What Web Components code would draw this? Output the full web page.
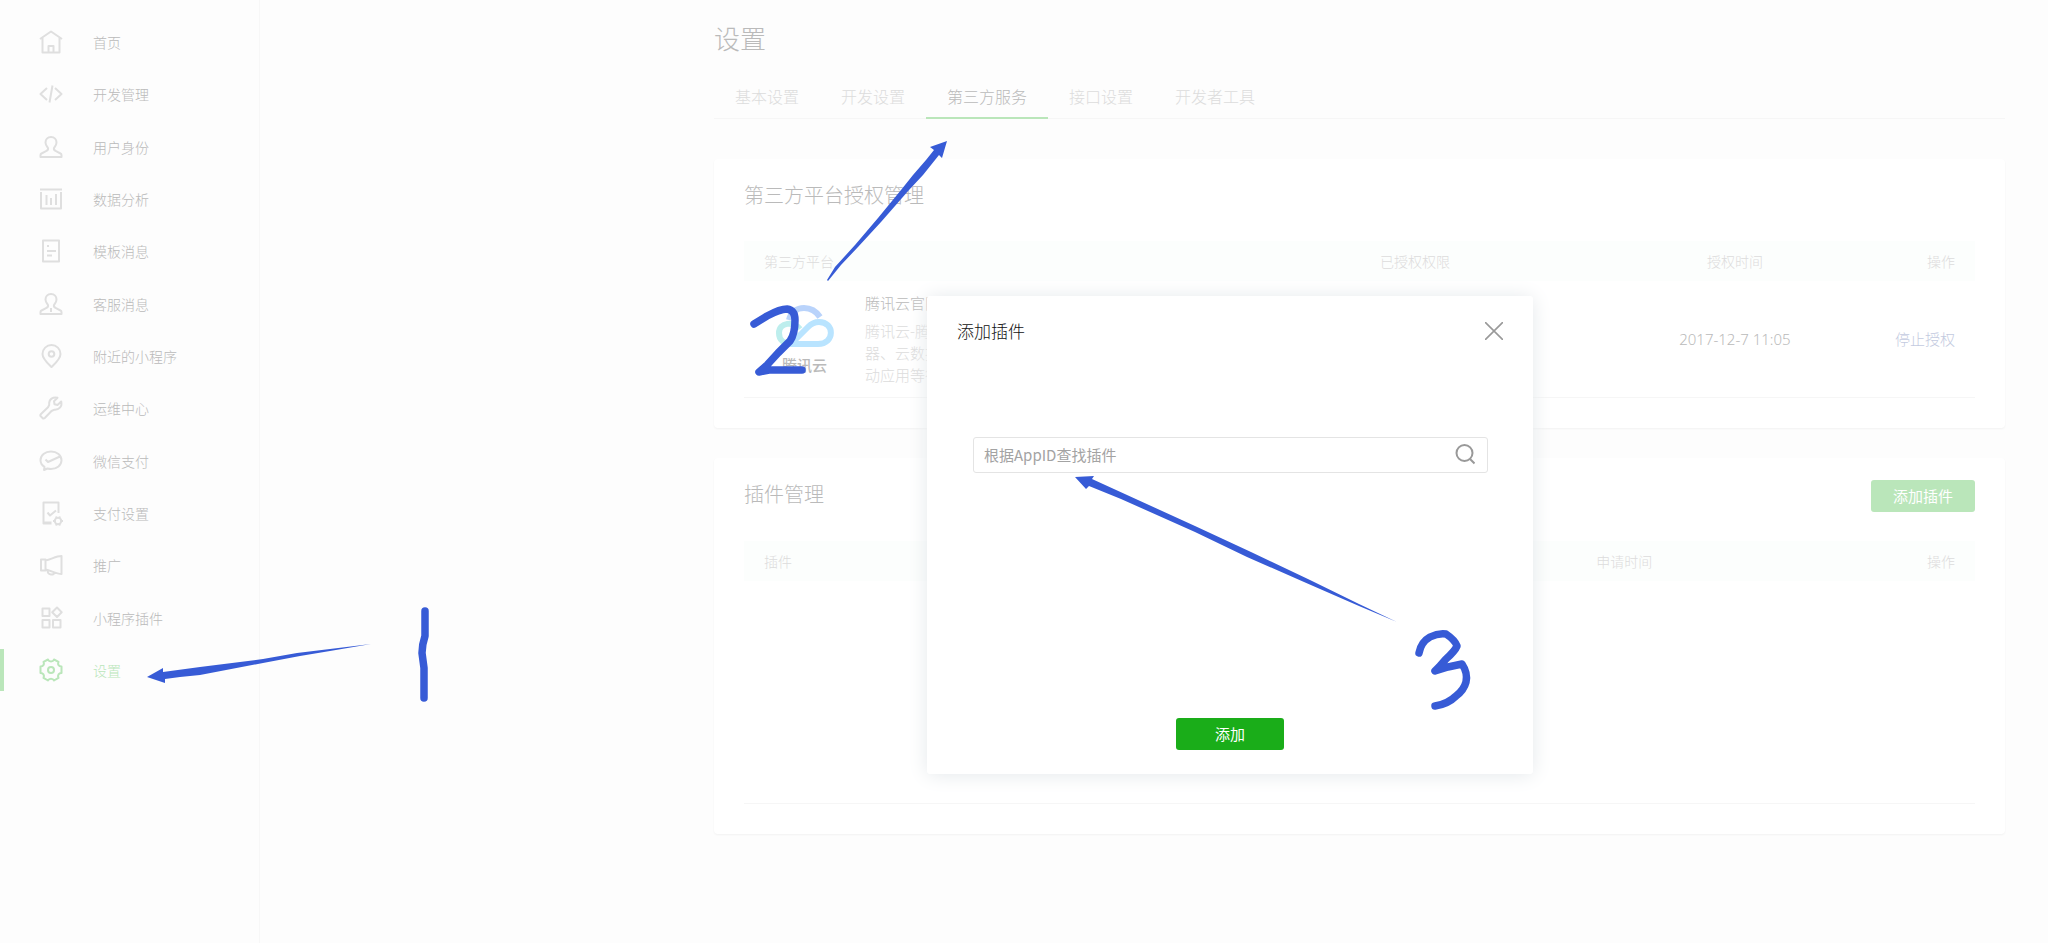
<!DOCTYPE html>
<html lang="zh-CN">
<head>
<meta charset="utf-8">
<title>设置</title>
<style>
  :root {
    --text: #bababa;
    --text-light: #dcdcdc;
    --line: #f6f6f6;
    --green: #1aad19;
    --green-light: #bae6ba;
  }

  body {
    background-color: #fdfdfd;
    color: var(--text);
    font-family: "Noto Sans CJK SC", sans-serif;
    font-size: 15px;
    line-height: 22px;
    margin: 0;
    min-height: 100vh;
    position: relative;
  }

  .page {
    display: flex;
    min-height: 100vh;
  }

  main {
    flex: 1;
    padding: 0 43px 0 454px;
  }

  h1 {
    font-size: 26px;
    font-weight: 300;
    line-height: 40px;
    margin: 18px 0 17px;
  }
</style>
</head>
<body>
  <div class="page">
    <side-menu></side-menu>
    <main>
      <h1>设置</h1>
      <tab-bar></tab-bar>
      <panel-card heading="第三方平台授权管理">
        <platform-table></platform-table>
      </panel-card>
      <panel-card heading="插件管理">
        <green-button slot="action" faded>添加插件</green-button>
        <plugin-table></plugin-table>
      </panel-card>
    </main>
  </div>
  <plugin-dialog heading="添加插件"></plugin-dialog>
  <pen-marks></pen-marks>

<script>
const icons = {
  home: '<path d="M1 9 12 1.500 23 9M3.500 8v14.500h17V8M9.500 22v-6h5v6"/>',
  code: '<path d="M8 6 1.500 12 8 18M16 6l6.500 6L16 18M13.500 3.500l-3 17"/>',
  user: '<path d="M12 2c-3.500 0-5.500 2.500-5.500 5.500 0 2.500 1.500 4 2.500 5.500.5 1.500-.5 2.500-2 3.200L2.500 18.500c-.8.4-1 1-1 1.500v2h21v-2c0-.5-.2-1.100-1-1.500L17 16.200c-1.500-.7-2.500-1.700-2-3.200 1-1.500 2.500-3 2.500-5.500C17.500 4.500 15.500 2 12 2z"/>',
  chart: '<path d="M1 2.500h22M2 5v16.500h20V5M7.500 8v10M12 11v7M17 7v11"/>',
  template: '<path d="M4 1.500h16v21H4zM8 7h2M8 12h9M8 16.500h5"/>',
  service: '<path d="M12 2c-3.500 0-5.500 2.500-5.500 5.500 0 2.500 1.500 4 2.500 5.500.5 1.500-.5 2.500-2 3.200L2.500 18.500c-.8.4-1 1-1 1.500v2h21v-2c0-.5-.2-1.100-1-1.500L17 16.200c-1.500-.7-2.500-1.700-2-3.200 1-1.500 2.500-3 2.500-5.500C17.500 4.500 15.500 2 12 2zM12 16v4"/>',
  nearby: '<path d="M12.500 23C9 19.500 3.500 15 3.500 10a9 9 0 0 1 18 0c0 5-5.500 9.500-9 13z"/><circle cx="12.500" cy="10" r="2.800"/>',
  wrench: '<path d="M18.500 1.800c-4-1.300-9 1.200-8.300 7.200L9 11.200 2 18c-1 1-.8 1.700 0 2.500l1.500 1.500c.8.8 1.500.8 2.500-.2L12.500 15l2.500-1.200c5 .5 8.500-3.300 7.200-8.300L18.500 9 15.500 8.300 15 5.200z"/>',
  pay: '<path d="M12 2.500c-6 0-10.500 3.800-10.500 8.700 0 3 1.500 5 4 6.700L5 21l3.500-1.500c1 .3 2.200.5 3.500.5 6 0 10.500-3.800 10.500-8.800S18 2.500 12 2.500zM6.500 10.500l2.500 2.500 12-5.500"/>',
  phone: '<path d="M19.500 12V1.500h-15v21h8M4.500 21.500h8M8.500 11.500l2.500 3 6-5"/><circle cx="19" cy="20" r="3.200"/><path d="M17 15.500l.6 1.500M21 15.500l-.6 1.500M17 24.500l.6-1.500M21 24.500l-.6-1.500M14 20h1.800M22.200 20H24" />',
  horn: '<path d="M2 6.500h4.500v11H2zM6.500 7.500C12 6.500 17 3 22.500 3v18C17 21 12 17.500 6.500 16.500M8.500 17.500c.5 5.500 6.500 4.500 7 2"/>',
  plugin: '<path d="M3.500 2.500h7v7.500h-7zM3.500 14h7v7.500h-7zM14 14h7.500v7.500h-7.500zM18 1.500 22.700 6.200 18 11 13.200 6.200z"/>',
  gear: '<path d="M9 1.500c1 2.500 5 2.500 6 0l4.500 2.300c-1.200 2.700.3 4.700 3 4.700v6.500c-2.700 0-4.200 2-3 4.800L15 22.500c-1-2.500-5-2.500-6 0l-4.500-2.700c1.200-2.800-.3-4.800-3-4.800V8.500c2.700 0 4.200-2 3-4.700z"/><circle cx="12" cy="12" r="3"/>'
}

class SideMenu extends HTMLElement {
  constructor () {
    super()
    this.shadow = this.attachShadow({ mode: 'open' })
    this.items = [
      ['home', '首页'],
      ['code', '开发管理'],
      ['user', '用户身份'],
      ['chart', '数据分析'],
      ['template', '模板消息'],
      ['service', '客服消息'],
      ['nearby', '附近的小程序'],
      ['wrench', '运维中心'],
      ['pay', '微信支付'],
      ['phone', '支付设置'],
      ['horn', '推广'],
      ['plugin', '小程序插件'],
      ['gear', '设置']
    ]
  }

  connectedCallback () {
    this.render()
  }

  render () {
    this.shadow.innerHTML =
      /* html */`
      <style>
        :host {
          border-right: 1px solid #f7f7f7;
          box-sizing: border-box;
          flex: none;
          width: 260px;
        }

        ul {
          display: grid;
          grid-auto-rows: 1fr;
          list-style: none;
          margin: 0;
          min-height: 680px;
          padding: 16px 0 0;
        }

        li {
          display: flex;
          align-items: center;
        }

        a {
          align-items: center;
          border-left: 4px solid transparent;
          color: inherit;
          display: flex;
          flex: 1;
          font-size: 14px;
          font-weight: 300;
          gap: 30px;
          height: 42px;
          padding-left: 35px;
          text-decoration: none;
        }

        svg {
          fill: none;
          height: 24px;
          overflow: visible;
          stroke: #dfdfdf;
          stroke-linejoin: round;
          stroke-width: 2;
          width: 24px;
        }

        a.active {
          border-color: var(--green-light);
          color: var(--green-light);
        }

        a.active svg {
          stroke: var(--green-light);
        }
      </style>

      <nav>
        <ul>
          ${this.items.map(([icon, label]) => `
            <li><a href="#" class="${icon === 'gear' ? 'active' : ''}">
              <svg viewBox="0 0 24 24">${icons[icon]}</svg>
              <span>${label}</span>
            </a></li>`).join('')}
        </ul>
      </nav>
    `
  }
}

class TabBar extends HTMLElement {
  constructor () {
    super()
    this.shadow = this.attachShadow({ mode: 'open' })
    this.tabs = ['基本设置', '开发设置', '第三方服务', '接口设置', '开发者工具']
  }

  connectedCallback () {
    this.render()
  }

  render () {
    this.shadow.innerHTML =
      /* html */`
      <style>
        :host {
          display: block;
        }

        nav {
          border-bottom: 1px solid var(--line);
          display: flex;
        }

        a {
          border-bottom: 2px solid transparent;
          color: var(--text-light);
          font-size: 16px;
          font-weight: 300;
          line-height: 42px;
          margin-bottom: -1px;
          padding: 0 21px;
          text-decoration: none;
        }

        a.active {
          border-color: var(--green-light);
          color: var(--text);
        }
      </style>

      <nav>
        ${this.tabs.map((tab, i) => `<a href="#" class="${i === 2 ? 'active' : ''}">${tab}</a>`).join('')}
      </nav>
    `
  }
}

class PanelCard extends HTMLElement {
  constructor () {
    super()
    this.shadow = this.attachShadow({ mode: 'open' })
  }

  connectedCallback () {
    this.render()
  }

  render () {
    this.shadow.innerHTML =
      /* html */`
      <style>
        :host {
          background-color: #fff;
          border-radius: 4px;
          box-shadow: 0 1px 2px #f2f2f2;
          display: block;
          margin-top: 30px;
          padding: 0 30px 30px;
        }

        :host(:first-of-type) {
          margin-top: 40px;
        }

        header {
          align-items: flex-start;
          display: flex;
          justify-content: space-between;
          padding: 22px 0 29px;
        }

        h2 {
          font-size: 20px;
          font-weight: 300;
          line-height: 27px;
          margin: 0 0 4px;
        }
      </style>

      <header>
        <h2>${this.getAttribute('heading')}</h2>
        <slot name="action"></slot>
      </header>
      <slot></slot>
    `
  }
}

const tableStyle = /* css */`
  :host {
    display: block;
  }

  table {
    border-bottom: 1px solid var(--line);
    border-collapse: collapse;
    font-weight: 300;
    table-layout: fixed;
    width: 100%;
  }

  th {
    background-color: #fcfefd;
    color: var(--text-light);
    font-size: 14px;
    font-weight: 300;
    height: 40px;
    line-height: 20px;
    padding: 0 20px;
  }

  td {
    padding: 0 20px;
    text-align: center;
  }

  th:first-child {
    text-align: left;
  }

  th:last-child,
  td:last-child {
    text-align: right;
  }
`

class PlatformTable extends HTMLElement {
  constructor () {
    super()
    this.shadow = this.attachShadow({ mode: 'open' })
  }

  connectedCallback () {
    this.render()
  }

  render () {
    this.shadow.innerHTML =
      /* html */`
      <style>
        ${tableStyle}

        .platform {
          display: flex;
          gap: 22px;
          height: 116px;
          text-align: left;
        }

        .logo {
          align-items: center;
          display: flex;
          flex-direction: column;
          font-size: 15px;
          font-weight: 500;
          padding: 24px 0 0 2px;
          width: 77px;
        }

        .logo svg {
          fill: none;
          height: 42px;
          margin-bottom: 7px;
          stroke-width: 6;
          width: 58px;
        }

        .name {
          line-height: 24px;
          padding: 10px 0 5px;
        }

        .about {
          color: var(--text-light);
          margin: 0;
        }

        .time {
          font-family: "Noto Sans", "Noto Sans CJK SC", sans-serif;
        }

        a {
          color: #c3cae0;
          text-decoration: none;
        }
      </style>

      <table>
        <colgroup>
          <col style="width: 36%">
          <col style="width: 37%">
          <col style="width: 15%">
          <col style="width: 12%">
        </colgroup>
        <thead>
          <tr><th>第三方平台</th><th>已授权权限</th><th>授权时间</th><th>操作</th></tr>
        </thead>
        <tbody>
          <tr>
            <td>
              <div class="platform">
                <div class="logo">
                  <svg viewBox="0 0 58 42">
                    <path d="M13 15C15 7 21 3 28 3c7 0 12 3 16 9" stroke="#b9d3fb"/>
                    <path d="M24 24c-6-8-21-7-21 4 0 7 5 11 12 11" stroke="#bdeeed"/>
                    <path d="M14 39h28c17 0 17-22 1-22-4 0-7 1-11 5L16 38" stroke="#b9e4ff"/>
                  </svg>
                  <span>腾讯云</span>
                </div>
                <div>
                  <div class="name">腾讯云官网</div>
                  <p class="about">腾讯云-腾讯<br>器、云数据<br>动应用等行</p>
                </div>
              </div>
            </td>
            <td></td>
            <td class="time">2017-12-7 11:05</td>
            <td><a href="#">停止授权</a></td>
          </tr>
        </tbody>
      </table>
    `
  }
}

class PluginTable extends HTMLElement {
  constructor () {
    super()
    this.shadow = this.attachShadow({ mode: 'open' })
  }

  connectedCallback () {
    this.render()
  }

  render () {
    this.shadow.innerHTML =
      /* html */`
      <style>
        ${tableStyle}

        .empty {
          height: 222px;
        }
      </style>

      <table>
        <colgroup>
          <col style="width: 60%">
          <col style="width: 23%">
          <col style="width: 17%">
        </colgroup>
        <thead>
          <tr><th>插件</th><th>申请时间</th><th>操作</th></tr>
        </thead>
        <tbody>
          <tr><td class="empty" colspan="3"></td></tr>
        </tbody>
      </table>
    `
  }
}

class GreenButton extends HTMLElement {
  constructor () {
    super()
    this.shadow = this.attachShadow({ mode: 'open' })
  }

  connectedCallback () {
    this.render()
  }

  render () {
    this.shadow.innerHTML =
      /* html */`
      <style>
        :host {
          display: inline-block;
        }

        button {
          background-color: var(--green);
          border: none;
          border-radius: 3px;
          color: #fff;
          cursor: pointer;
          display: block;
          font: inherit;
          line-height: 32px;
          min-width: 104px;
          padding: 0 20px;
        }

        :host([faded]) button {
          background-color: var(--green-light);
        }

        :host([wide]) button {
          min-width: 108px;
        }
      </style>

      <button type="button"><slot></slot></button>
    `
  }
}

class PluginDialog extends HTMLElement {
  constructor () {
    super()
    this.shadow = this.attachShadow({ mode: 'open' })
  }

  connectedCallback () {
    this.render()
  }

  render () {
    this.shadow.innerHTML =
      /* html */`
      <style>
        :host {
          background-color: #fff;
          border-radius: 3px;
          box-shadow: 0 1px 20px #e4e8eb;
          box-sizing: border-box;
          display: flex;
          flex-direction: column;
          left: 927px;
          min-height: 478px;
          padding: 23px 30px 24px;
          position: absolute;
          top: 296px;
          width: 606px;
        }

        header {
          align-items: center;
          display: flex;
          height: 24px;
          justify-content: space-between;
        }

        h3 {
          color: #111;
          font-size: 17px;
          font-weight: 300;
          margin: 0;
        }

        svg {
          display: block;
          fill: none;
          stroke: #999;
        }

        .icon-button {
          background: none;
          border: none;
          cursor: pointer;
          padding: 0;
        }

        .search {
          align-items: center;
          border: 1px solid #e4e4e4;
          border-radius: 3px;
          display: flex;
          height: 34px;
          margin: 94px 15px 0 16px;
          padding: 0 12px 0 10px;
        }

        input {
          background: none;
          border: none;
          color: #222;
          flex: 1;
          font: inherit;
          outline: none;
          padding: 0;
        }

        input::placeholder {
          color: #a3a3a3;
        }

        footer {
          margin-top: auto;
          text-align: center;
        }
      </style>

      <header>
        <h3>${this.getAttribute('heading')}</h3>
        <button class="icon-button" type="button" aria-label="关闭">
          <svg width="18" height="18" stroke-width="1.6"><path d="M0 0l18 18M18 0 0 18"/></svg>
        </button>
      </header>
      <div class="search">
        <input type="text" aria-label="根据AppID查找插件" placeholder="根据AppID查找插件">
        <button class="icon-button" type="button" aria-label="搜索">
          <svg width="20" height="22" stroke-width="2"><circle cx="9.500" cy="9" r="8"/><path d="M15 15l4.500 4.500"/></svg>
        </button>
      </div>
      <footer><green-button wide>添加</green-button></footer>
    `
  }
}

// hand-drawn numbers and arrows laid over the page
class PenMarks extends HTMLElement {
  constructor () {
    super()
    this.shadow = this.attachShadow({ mode: 'open' })
  }

  connectedCallback () {
    this.render()
  }

  render () {
    this.shadow.innerHTML =
      /* html */`
      <style>
        :host {
          inset: 0;
          pointer-events: none;
          position: absolute;
        }

        svg {
          display: block;
          height: 100%;
          width: 100%;
        }

        .arrow {
          fill: #375bd6;
        }

        .digit {
          fill: none;
          stroke: #375bd6;
          stroke-linecap: round;
          stroke-linejoin: round;
          stroke-width: 7.500;
        }
      </style>

      <svg>
        <path class="arrow" d="M147 677 163 668 163 672 200 667 263 659 297 653 330 649 371 644 330 651 300 656 263 663 200 675 180 677 165 679 165 683Z"/>
        <path class="digit" d="M425 611V636Q422 645 422 653L424 668V698"/>
        <path class="arrow" d="M947 141 930 147 934 150 926 160 913 175 901 190 878 218 855 245 835 267 827 280 828 281 841 265 858 247 881 222 909 190 923 175 939 155 942 158Z"/>
        <path class="digit" d="M754 324 767 316Q780 309 787 309Q795 310 795 320Q795 334 790 341L778 353 767 365 759 372 769 370H802"/>
        <path class="arrow" d="M1075 477 1094 476 1092 479 1138 500 1195 526 1251 552 1310 580 1359 604 1397 622 1359 606 1304 582 1247 557 1195 532 1121 499 1089 486 1086 489Z"/>
        <path class="digit" d="M1419 653Q1421 642 1430 637Q1438 633 1446 634Q1455 640 1457 646Q1455 651 1446 659L1439 667 1435 671 1448 667 1462 664Q1468 673 1466 682Q1464 690 1456 696Q1448 704 1435 706"/>
      </svg>
    `
  }
}

customElements.define('side-menu', SideMenu)
customElements.define('tab-bar', TabBar)
customElements.define('panel-card', PanelCard)
customElements.define('platform-table', PlatformTable)
customElements.define('plugin-table', PluginTable)
customElements.define('green-button', GreenButton)
customElements.define('plugin-dialog', PluginDialog)
customElements.define('pen-marks', PenMarks)
</script>
</body>
</html>
